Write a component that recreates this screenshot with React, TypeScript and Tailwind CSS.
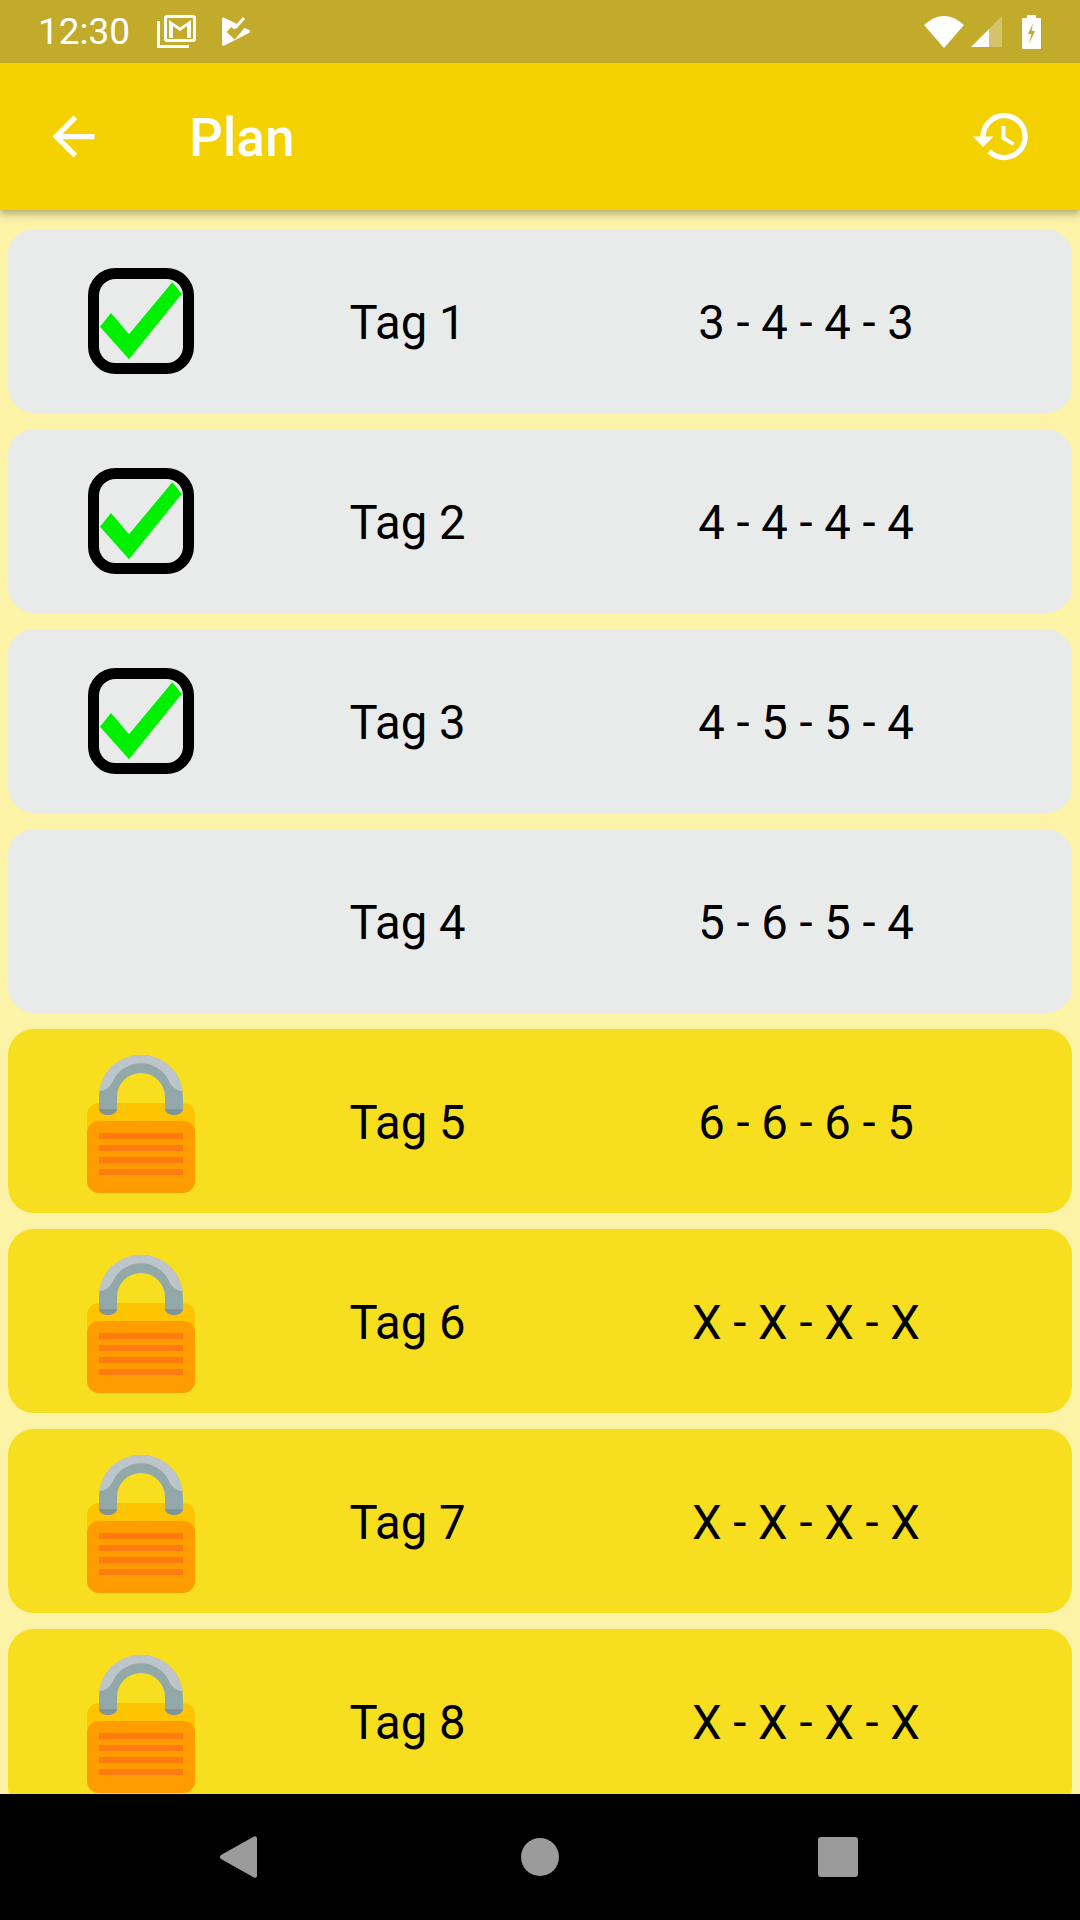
const days = [
  { label: 'Tag 1', reps: '3 - 4 - 4 - 3', state: 'done' },
  { label: 'Tag 2', reps: '4 - 4 - 4 - 4', state: 'done' },
  { label: 'Tag 3', reps: '4 - 5 - 5 - 4', state: 'done' },
  { label: 'Tag 4', reps: '5 - 6 - 5 - 4', state: 'open' },
  { label: 'Tag 5', reps: '6 - 6 - 6 - 5', state: 'locked' },
  { label: 'Tag 6', reps: 'X - X - X - X', state: 'locked' },
  { label: 'Tag 7', reps: 'X - X - X - X', state: 'locked' },
  { label: 'Tag 8', reps: 'X - X - X - X', state: 'locked' },
];

const CheckIcon = () => (
  <svg width="144" height="144" viewBox="0 0 144 144">
    <rect x="24.500" y="24.500" width="95" height="95" rx="22" fill="none" stroke="#000" strokeWidth="11" />
    <polygon points="31,77.700 42,64 60,85.300 103.300,33.300 112.700,45 60,110.300" fill="#00f000" />
  </svg>
);

const LockIcon = () => (
  <svg width="144" height="144" viewBox="0 0 144 144">
    <rect x="18" y="54" width="108" height="60" rx="12" fill="#ffc400" />
    <rect x="18" y="72" width="108" height="72" rx="12" fill="#ff9c00" />
    <rect x="30" y="84" width="84" height="6" fill="#ff7b0f" />
    <rect x="30" y="96" width="84" height="6" fill="#ff7b0f" />
    <rect x="30" y="108" width="84" height="6" fill="#ff7b0f" />
    <rect x="30" y="120" width="84" height="6" fill="#ff7b0f" />
    <path d="M30 60V48a42 42 0 0 1 84 0V60a9 6 0 0 1-18 0V48a24 24 0 0 0-48 0V60a9 6 0 0 1-18 0z" fill="#93a8a8" />
    <path d="M30.400 42C36 42 42 38 45 30A31 31 0 0 1 99 30C102 38 108 42 113.600 42A42 42 0 0 0 30.400 42z" fill="#bcc5ca" />
    <path d="M30 60a9 6 0 0 0 18 0zM96 60a9 6 0 0 0 18 0z" fill="#7f9494" />
  </svg>
);

const StatusBar = () => (
  <div className="relative z-20 h-[63px] shrink-0 bg-[#c2aa2a] flex items-center text-white">
    <span className="ml-[38px] text-[37px] leading-none">12:30</span>
    <svg className="ml-[27px]" width="39" height="33" viewBox="0 0 39 33" fill="none">
      <path d="M1.500 6V31.500H32" stroke="#fff" strokeWidth="3" />
      <rect x="8.500" y="1.500" width="29" height="24" rx="1.500" stroke="#fff" strokeWidth="3" />
      <path d="M12 5L23 12.500L34 5V23H30V11L23 16L16 11V23H12z" fill="#fff" />
    </svg>
    <svg className="ml-[26px]" width="28" height="29" viewBox="0 0 28 29">
      <path d="M0 2a1.500 1.500 0 0 1 2.300-1.300L27 13a1.700 1.700 0 0 1 0 3L2.300 28.500A1.500 1.500 0 0 1 0 27z" fill="#fff" />
      <path d="M7 12.500L12.500 17.500L25 2" fill="none" stroke="#c2aa2a" strokeWidth="7" />
      <path d="M9 12.500L12.500 15.500L19 8" fill="none" stroke="#c2aa2a" strokeWidth="3" />
      <path d="M13 11L22 1" fill="none" stroke="#fff" strokeWidth="3" />
    </svg>
    <svg className="ml-auto" width="40" height="33" viewBox="0 0 40 33">
      <path d="M0 10Q20-8 40 10L20 33z" fill="#fff" />
    </svg>
    <svg className="ml-[7px]" width="31" height="31" viewBox="0 0 31 31">
      <path d="M31 0V31H18V13z" fill="#fff" opacity="0.3" />
      <path d="M18 13V31H0z" fill="#fff" />
    </svg>
    <svg className="ml-[20px] mr-[39px]" width="19" height="34" viewBox="0 0 19 34">
      <path d="M5 0h9v3h4a1 1 0 0 1 1 1v29a1 1 0 0 1-1 1H1a1 1 0 0 1-1-1V4a1 1 0 0 1 1-1h4z" fill="#fff" />
      <path d="M11 8l-5 11h3.500L7 29l6-13H9.500z" fill="#c2aa2a" />
    </svg>
  </div>
);

const AppBar = () => (
  <div className="relative z-10 h-[147px] shrink-0 bg-[#f4d100] flex items-center text-white shadow-[0_4px_8px_rgba(0,0,0,0.3)]">
    <svg className="ml-[42px]" width="63" height="63" viewBox="0 0 24 24" fill="#fff">
      <path d="M20 11H7.830l5.590-5.590L12 4l-8 8 8 8 1.410-1.410L7.830 13H20v-2z" />
    </svg>
    <span className="ml-[84px] text-[53px] leading-none font-medium mt-[3px]">Plan</span>
    <svg className="ml-auto mr-[47px]" width="63" height="63" viewBox="0 0 24 24" fill="#fff">
      <path d="M13 3c-4.970 0-9 4.030-9 9H1l3.890 3.890.07.140L9 12H6c0-3.870 3.130-7 7-7s7 3.130 7 7-3.130 7-7 7c-1.930 0-3.680-.790-4.940-2.060l-1.420 1.420C8.270 19.990 10.510 21 13 21c4.970 0 9-4.030 9-9s-4.030-9-9-9zm-1 5v5l4.280 2.540.720-1.210-3.500-2.080V8H12z" />
    </svg>
  </div>
);

const NavBar = () => (
  <div className="h-[126px] shrink-0 bg-black flex items-center pl-[220px]">
    <svg width="37" height="42" viewBox="0 0 37 42">
      <path d="M1 19L34 .500a2 2 0 0 1 3 1.500V40a2 2 0 0 1-3 1.500L1 23a2.500 2.500 0 0 1 0-4z" fill="#9b9b9b" />
    </svg>
    <div className="ml-[264px] w-[38px] h-[38px] rounded-full bg-[#9b9b9b]" />
    <div className="ml-[259px] w-[40px] h-[40px] rounded-[3px] bg-[#9b9b9b]" />
  </div>
);

export default function App() {
  return (
    <div className="w-[1080px] h-[1920px] flex flex-col bg-[#fdf3a7] overflow-hidden font-['Roboto',sans-serif]">
      <StatusBar />
      <AppBar />
      <div className="flex-1 min-h-0 overflow-hidden px-[8px] pt-[19px] flex flex-col gap-[16px]">
        {days.map(day => (
          <div
            key={day.label}
            className={`h-[184px] shrink-0 rounded-[26px] grid grid-cols-[1fr_1fr_2fr] items-center text-black text-[47.250px] ${day.state === 'locked' ? 'bg-[#f7de1f]' : 'bg-[#e9ebea]'}`}
          >
            <div className="flex justify-center">
              {day.state === 'done' && <CheckIcon />}
              {day.state === 'locked' && <LockIcon />}
            </div>
            <div className="text-center pt-[5px] pl-[1px]">{day.label}</div>
            <div className="text-center pt-[5px]">{day.reps}</div>
          </div>
        ))}
      </div>
      <NavBar />
    </div>
  );
}
